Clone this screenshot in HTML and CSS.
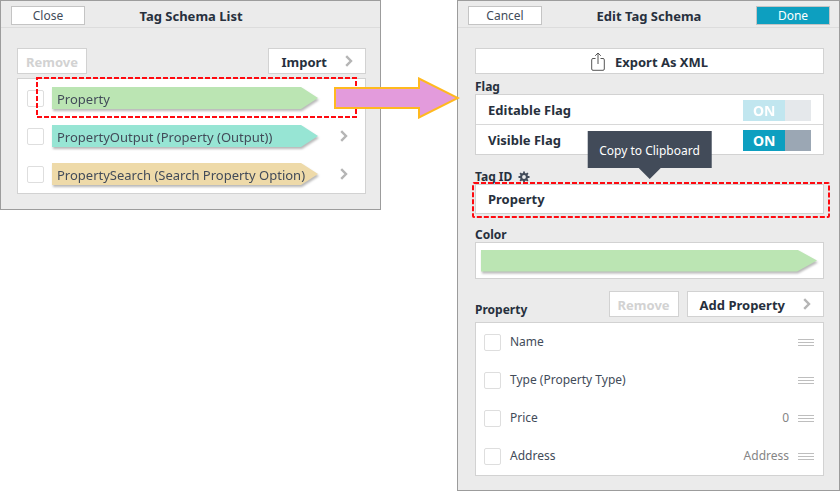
FILE: index.html
```html
<!DOCTYPE html>
<html lang="en">
<head>
<meta charset="utf-8">
<title>Tag Schema</title>
<link rel="stylesheet" href="styles.css">
</head>
<body>
<main class="screens">
  <section class="panel">
    <header class="bar">
      <button class="bar-button">Close</button>
      <h1>Tag Schema List</h1>
      <span></span>
    </header>
    <div class="content">
      <div class="tools spread">
        <button class="button" disabled>Remove</button>
        <button class="button with-chevron">Import
          <svg class="chevron" viewBox="0 0 8 12"><path d="M1.2 1.2 6 6 1.2 10.8"/></svg>
        </button>
      </div>
      <ul class="list">
        <li class="row">
          <input type="checkbox" aria-label="Select Property">
          <span class="tag-shadow"><span class="tag green">Property</span></span>
        </li>
        <li class="row">
          <input type="checkbox" aria-label="Select PropertyOutput">
          <span class="tag-shadow"><span class="tag teal">PropertyOutput (Property (Output))</span></span>
          <svg class="chevron" viewBox="0 0 8 12"><path d="M1.2 1.2 6 6 1.2 10.8"/></svg>
        </li>
        <li class="row">
          <input type="checkbox" aria-label="Select PropertySearch">
          <span class="tag-shadow"><span class="tag sand">PropertySearch (Search Property Option)</span></span>
          <svg class="chevron" viewBox="0 0 8 12"><path d="M1.2 1.2 6 6 1.2 10.8"/></svg>
        </li>
      </ul>
    </div>
    <svg class="outline outline-row"><rect x="1" y="1" width="100%" height="100%"/></svg>
    <svg class="flow-arrow" viewBox="0 0 126 42"><path d="M1 11H85V1.500L124 21 85 40.500V31H1Z"/></svg>
  </section>

  <section class="panel editor">
    <header class="bar">
      <button class="bar-button">Cancel</button>
      <h1>Edit Tag Schema</h1>
      <button class="bar-button primary">Done</button>
    </header>
    <div class="content">
      <button class="button export">
        <svg class="share" viewBox="0 0 14 19"><path d="M4.500 6.500H2Q.7 6.500.7 7.800V17Q.7 18.300 2 18.300H12Q13.300 18.300 13.300 17V7.800Q13.300 6.500 12 6.500H9.500M7 12V1M4.200 3.800 7 1 9.800 3.800"/></svg>
        Export As XML
      </button>
      <h2>Flag</h2>
      <div class="list flags">
        <label class="flag">Editable Flag
          <input type="checkbox" class="switch-input" checked disabled>
          <span class="switch">ON</span>
        </label>
        <label class="flag">Visible Flag
          <input type="checkbox" class="switch-input" checked>
          <span class="switch">ON</span>
        </label>
      </div>
      <label class="caption" for="tag-id">Tag ID
        <svg class="gear" viewBox="-6 -6 12 12"><path class="teeth" d="M0-5.500V-3M0 5.500V3M-5.500 0H-3M5.500 0H3M-3.900-3.900-2-2M3.900 3.900 2 2M-3.900 3.900-2 2M3.900-3.900 2-2"/><circle r="2.900"/></svg>
      </label>
      <div class="field">
        <input id="tag-id" type="text" value="Property">
        <svg class="outline outline-field"><rect x="1" y="1" rx="1" width="100%" height="100%"/></svg>
        <div class="tooltip" role="tooltip">Copy to Clipboard</div>
      </div>
      <h2 class="color-title">Color</h2>
      <button class="color" aria-label="Color"><span class="tag-shadow"><span class="tag green"></span></span></button>
      <div class="tools property-tools">
        <h2>Property</h2>
        <button class="button" disabled>Remove</button>
        <button class="button with-chevron">Add Property
          <svg class="chevron" viewBox="0 0 8 12"><path d="M1.2 1.2 6 6 1.2 10.8"/></svg>
        </button>
      </div>
      <ul class="list">
        <li class="row"><label><input type="checkbox">Name</label><span class="value"></span><svg class="grip" viewBox="0 0 16 7"><path d="M0 .5H16M0 3.500H16M0 6.500H16"/></svg></li>
        <li class="row"><label><input type="checkbox">Type (Property Type)</label><span class="value"></span><svg class="grip" viewBox="0 0 16 7"><path d="M0 .5H16M0 3.500H16M0 6.500H16"/></svg></li>
        <li class="row"><label><input type="checkbox">Price</label><span class="value">0</span><svg class="grip" viewBox="0 0 16 7"><path d="M0 .5H16M0 3.500H16M0 6.500H16"/></svg></li>
        <li class="row"><label><input type="checkbox">Address</label><span class="value">Address</span><svg class="grip" viewBox="0 0 16 7"><path d="M0 .5H16M0 3.500H16M0 6.500H16"/></svg></li>
      </ul>
    </div>
  </section>
</main>
</body>
</html>
```
FILE: styles.css
```css
* { box-sizing: border-box; }
body {
  margin: 0;
  background: #fff;
  color: #424b59;
  font: 13px/18px "Noto Sans", "Open Sans", sans-serif;
}
button, input { font: inherit; color: inherit; margin: 0; }
h1, h2, ul { margin: 0; padding: 0; }
ul { list-style: none; }
svg { display: block; flex: none; fill: none; }

.screens {
  display: grid;
  grid-template-columns: 381fr 383fr;
  column-gap: 76px;
  align-items: start;
}
.panel {
  position: relative;
  background: #ebebeb;
  border: 1px solid #9c9c9c;
}
.bar {
  display: grid;
  grid-template-columns: 74px 1fr 74px;
  align-items: center;
  height: 27px;
  padding: 3px 9px 0 10px;
  border-bottom: 1px solid #dcdcdc;
}
.bar h1 {
  padding-top: 1px;
  font-size: 13px;
  line-height: 18px;
  text-align: center;
  color: #27303d;
}
.bar-button {
  height: 19px;
  padding: 0;
  background: #fff;
  border: 1px solid #c4c4c4;
  font-size: 12px;
  line-height: 16px;
}
.bar-button.primary { background: #0d9fc0; border-color: #c4c4c4; color: #fff; }

.content {
  display: flex;
  flex-direction: column;
  padding: 20px 14px 15px 16px;
}
.editor .content { padding: 20px 15px 14px 17px; }
.tools { display: flex; align-items: center; gap: 8px; margin-bottom: 4px; }
.spread { justify-content: space-between; }
.button {
  height: 26px;
  padding: 2px 8px 0;
  background: #fff;
  border: 1px solid #d2d2d2;
  font-size: 13px;
  font-weight: bold;
  line-height: 18px;
  color: #27303d;
}
.button:disabled { color: #d2d2d2; }
.with-chevron {
  display: flex;
  align-items: center;
  gap: 18px;
  padding: 2px 12px 0;
}
.chevron { width: 8px; height: 12px; stroke: #b5b5b5; stroke-width: 2.4; }
.button .chevron { margin-bottom: 2px; }
.export { display: flex; align-items: center; justify-content: center; gap: 10px; }
.share { width: 14px; height: 19px; margin-bottom: 2px; stroke: #555; }

.list { background: #fff; border: 1px solid #d2d2d2; }
.row {
  display: flex;
  align-items: center;
  height: 38px;
  padding: 0 17px 0 9px;
}
.row label { display: flex; align-items: center; gap: 9px; }
.row input {
  appearance: none;
  flex: none;
  width: 17px;
  height: 17px;
  background: #fff;
  border: 1px solid #dedede;
  border-radius: 2px;
}
.row .tag-shadow { flex: 1; max-width: 266px; margin: 0 auto 0 8px; }
.tag-shadow { display: block; filter: drop-shadow(1px 2px 1px rgba(0, 0, 0, .28)); }
.tag {
  display: block;
  height: 22px;
  padding: 3px 0 0 5px;
  white-space: nowrap;
  clip-path: polygon(0 0, calc(100% - 17px) 0, 100% 50%, calc(100% - 17px) 100%, 0 100%);
}
.green { background: #bbe5b3; }
.teal { background: #97e5d4; }
.sand { background: #eedaa9; }

h2, .caption { font-size: 12px; line-height: 16px; font-weight: bold; color: #27303d; }
h2 { padding-top: 5px; margin-bottom: -1px; }
.flag {
  position: relative;
  display: flex;
  align-items: center;
  justify-content: space-between;
  height: 30px;
  padding: 1px 12px 0;
  border-bottom: 1px solid #d8d8d8;
  font-weight: bold;
  color: #27303d;
}
.flag:last-child { border-bottom: 0; height: 29px; }
.switch-input { position: absolute; right: 12px; opacity: 0; }
.switch {
  width: 68px;
  height: 21px;
  padding-left: 10px;
  background: linear-gradient(to right, #0d9fc0 42px, #9ba7b4 42px);
  color: #fff;
  font-size: 14px;
  line-height: 22px;
}
.switch-input:disabled + .switch { opacity: .25; }
.caption { display: flex; align-items: center; gap: 6px; margin-top: 14px; margin-bottom: -1px; }
.gear { width: 12px; height: 12px; stroke: #424b59; stroke-width: 2; }
.gear .teeth { stroke-width: 1.800; }
.field { position: relative; }
.field input {
  display: block;
  width: 100%;
  height: 30px;
  padding: 0 12px;
  background: #fff;
  border: 1px solid #d2d2d2;
  border-radius: 0;
  font-weight: bold;
  color: #27303d;
}
.outline { position: absolute; overflow: hidden; pointer-events: none; }
.outline rect { width: calc(100% - 2px); height: calc(100% - 2px); stroke: #ff0a10; stroke-width: 2; stroke-dasharray: 5 2; }
.outline-row { left: 35px; top: 76px; width: calc(100% - 58px); height: 41px; }
.outline-field { left: -3px; top: -2px; width: calc(100% + 9px); height: 36px; }
.flow-arrow { position: absolute; right: -80px; top: 76px; width: 126px; height: 42px; z-index: 2; }
.flow-arrow path { fill: #e39bdc; stroke: #ffb91f; stroke-width: 2; }
.tooltip {
  position: absolute;
  left: 50%;
  bottom: 46px;
  transform: translateX(-50%);
  height: 37px;
  padding: 0 12px;
  background: #424b59;
  color: #fff;
  font-size: 12px;
  line-height: 39px;
  white-space: nowrap;
}
.tooltip::after {
  content: "";
  position: absolute;
  left: calc(50% - 11px);
  top: 100%;
  border: 11px solid transparent;
  border-top-color: #424b59;
  border-bottom: 0;
}
.color-title { padding-top: 13px; }
.color {
  height: 37px;
  padding: 0 6px 0 5px;
  background: #fff;
  border: 1px solid #d2d2d2;
}
.color .tag { clip-path: polygon(0 0, calc(100% - 20px) 0, 100% 50%, calc(100% - 20px) 100%, 0 100%); }
.property-tools { margin-top: 12px; margin-bottom: 5px; }
.property-tools h2 { margin-right: auto; padding-top: 11px; }
.editor .row { padding: 0 9px 0 8px; font-size: 12px; }
.value { margin-left: auto; padding-right: 9px; color: #858585; }
.grip { width: 16px; height: 7px; stroke: #bebebe; }
```
